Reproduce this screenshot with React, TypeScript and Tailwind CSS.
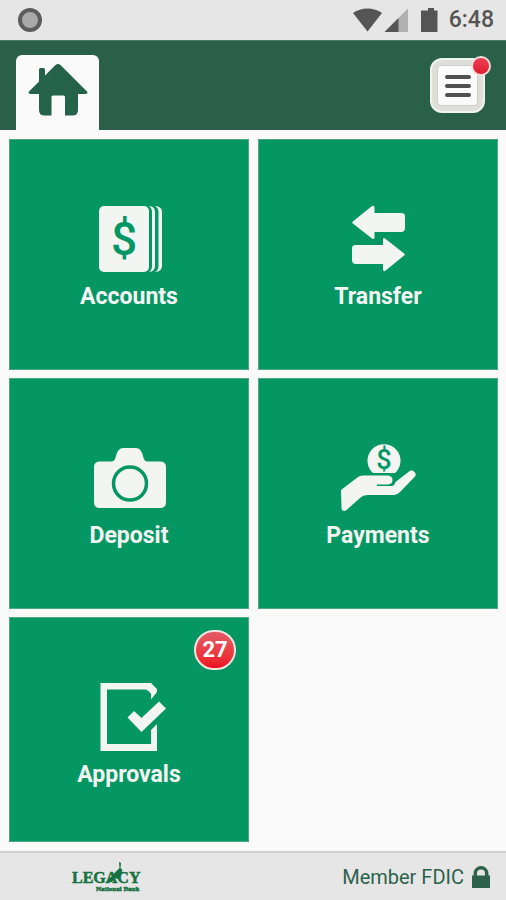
import type { ReactNode } from 'react';

type TileProps = {
  label: string;
  badge?: number;
  children: ReactNode;
};

const Tile: React.FC<TileProps> = ({ label, badge, children }) => (
  <button className="relative flex flex-col items-center justify-start gap-[9px] border border-[#4fa883] bg-[#059763] pt-16 text-[#f3f5f3]">
    <svg viewBox="0 0 80 70" className="h-[70px] w-20 overflow-visible" fill="currentColor" aria-hidden="true">
      {children}
    </svg>
    <span className="text-[23px] leading-7 font-bold">{label}</span>
    {badge !== undefined && (
      <span className="absolute top-3 right-3 flex h-10 w-[42px] items-center justify-center rounded-full border-2 border-[#f4e4e0] bg-linear-to-b from-[#e35a66] to-[#ee0a1c] text-[22px] leading-7 font-bold text-white">
        {badge}
      </span>
    )}
  </button>
);

const StatusBar: React.FC = () => (
  <div className="flex h-10 items-center justify-between bg-[#e6e6e6] pr-3 pl-[18px] text-[#555555]">
    <span className="h-6 w-6 rounded-full border-4 border-[#5c5c5c] bg-[#a9a9a9]" />
    <div className="flex items-center">
      <svg viewBox="0 0 92 24" className="mr-1 h-6 w-[92px]" fill="currentColor" aria-hidden="true">
        <path d="M0 5C8-1 21-1 29 5L14.500 23.500z" />
        <path d="M55 0.500V24H31.500z" fill="#b0b0b0" />
        <path d="M45.500 10V24H31.500z" />
        <path d="M72 2.500h3V0h6v2.500h3.500V24H68V2.500z" />
      </svg>
      <span className="text-[23px] leading-7 font-medium">6:48</span>
    </div>
  </div>
);

const Header: React.FC = () => (
  <header className="flex h-[90px] items-end justify-between border-t border-[#4a7a62] bg-[#2a5f48] pr-[21px] pl-4">
    <button aria-label="Home" className="flex h-[75px] w-[83px] justify-center rounded-t-md bg-[#fafafa] pt-2 text-[#25624a]">
      <svg viewBox="0 0 60 54" className="h-[54px] w-[60px]" fill="currentColor" aria-hidden="true">
        <path d="M27.500 2Q30 .2 32.500 2L59 28.500Q60.500 31 57 31H50V47Q50 52.500 44.500 52.500H37V34Q37 32.500 35.500 32.500H25Q23.500 32.500 23.500 34V52.500H16.500Q11 52.500 11 47V31H3Q-.5 31 1 28.500L11 18.500V6.500Q11 5 12.500 5H15.500Q17 5 17 6.500V12.500z" />
      </svg>
    </button>
    <button aria-label="Menu" className="relative mb-[17px] h-[55px] w-[55px] rounded-xl border-2 border-[#f1f3ef] bg-[#dedfd9] p-[5px]">
      <span className="flex h-full flex-col items-center justify-center gap-[5px] rounded-sm border border-[#d0cfcc] bg-[#fafafa]">
        <span className="h-1 w-[26px] rounded-full bg-[#505050]" />
        <span className="h-1 w-[26px] rounded-full bg-[#505050]" />
        <span className="h-1 w-[26px] rounded-full bg-[#505050]" />
      </span>
      <span className="absolute -top-1 -right-2 h-5 w-5 rounded-full border-2 border-[#f2ddda] bg-linear-to-b from-[#ee3c50] to-[#df1930]" />
    </button>
  </header>
);

const Footer: React.FC = () => (
  <footer className="flex h-[49px] items-center justify-between border-t-2 border-[#cfcfcf] bg-[#e6e6e6] pr-4 pl-[72px] text-[#2c624b]">
    <svg viewBox="0 0 80 32" className="h-8 w-20 overflow-visible" fill="#17713f" role="img" aria-label="Legacy National Bank">
      <text fontFamily="Liberation Serif, serif" fontWeight="700" stroke="#17713f" strokeWidth=".5">
        <tspan x="0" y="22" fontSize="16">LEGACY</tspan>
        <tspan x="24" y="30" fontSize="7">National Bank</tspan>
      </text>
      <path d="M47 1L49 2 48.500 7 50.500 9 48 15 46 18 43 17 40 21 33 22 40 15 43.500 11 47.500 7z" />
    </svg>
    <div className="flex items-center gap-2">
      <span className="text-xl">Member FDIC</span>
      <svg viewBox="0 0 18 22" className="h-[22px] w-[18px]" fill="currentColor" aria-hidden="true">
        <path d="M1.500 9.500V7.500a7.500 7.500 0 0 1 15 0v2H18V22H0V9.500zM5 9.500h8v-2a4 4 0 0 0-8 0z" />
      </svg>
    </div>
  </footer>
);

const App: React.FC = () => {
  return (
    <div className="flex min-h-screen flex-col bg-[#fafafa] font-[Roboto,sans-serif]">
      <StatusBar />
      <Header />

      <main className="grid flex-1 grid-cols-2 grid-rows-[231fr_231fr_225fr] gap-x-[9px] gap-y-2 py-[9px] pr-2 pl-[9px]">
        <Tile label="Accounts">
          <rect x="10" y="2" width="50" height="66" rx="5" />
          <path d="M60 2Q66 2.500 66 8V62Q66 67.500 60 68Q63 66 63 62V8Q63 4 60 2z" />
          <path d="M66 2Q73 2.500 73 8V62Q73 67.500 66 68Q69.500 66 69.500 62V8Q69.500 4 66 2z" />
          <text x="35" y="51" textAnchor="middle" fontFamily="Roboto, sans-serif" fontWeight="500" fontSize="46" fill="#059763">$</text>
        </Tile>

        <Tile label="Transfer">
          <path d="M15.500 17L34 2Q36.500 1 36.500 4V9H63Q67 9 67 12V24Q67 28 63 28H36.500V33Q36.500 36 34 34.500L15.500 20Q13 18.500 15.500 17z" />
          <path d="M65.500 49L47 34.500Q45 33 45 36V41H18Q14 41 14 44V56Q14 60 18 60H45V65Q45 68 47 67L65.500 52Q68 50.500 65.500 49z" />
        </Tile>

        <Tile label="Deposit">
          <path d="M11 18.500H23Q26 18 27 13Q29 5 34 5H47Q52 5 54 13Q55 18 58 18.500H71Q77 18.500 77 24V59Q77 65 71 65H11Q5 65 5 59V24Q5 18.500 11 18.500z" />
          <circle cx="41" cy="40.500" r="16.500" fill="none" stroke="#059763" strokeWidth="3.500" />
        </Tile>

        <Tile label="Payments">
          <path d="M35 30A16.500 16.500 0 1 1 57 30z" />
          <text x="46" y="26" textAnchor="middle" fontFamily="Roboto, sans-serif" fontWeight="500" fontSize="27" fill="#059763">$</text>
          <path d="M3 47L20 34Q22 32.500 25 32.500H50Q54.500 33 54.500 37T50 41.500H39V43H54Q57 42 57.500 39L71 28.500Q74 26.500 76.500 29T76.500 34L62 49Q59 52 56 52H30Q25 52 22 55L8 67.500Q4 69 3.500 65z" />
        </Tile>

        <Tile label="Approvals" badge={27}>
          <path d="M11.500 1H62L68 7V10L62 17.500V12Q59 7.500 56 7.500H18V62H62V48L68 42V69H11.500z" />
          <path d="M38.500 35.500L45 29 52.500 36 70 19.500 77 26.500 52.500 50z" />
        </Tile>
      </main>

      <Footer />
    </div>
  );
};

export default App;
